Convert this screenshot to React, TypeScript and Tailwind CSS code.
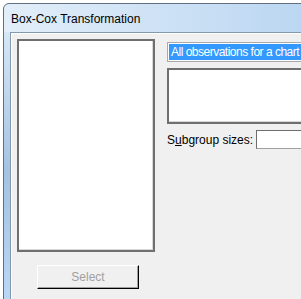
import React from "react";

const font = { fontFamily: '"Liberation Sans", Arial, sans-serif' };

const App: React.FC = () => {
  return (
    <div className="w-[301px] h-[299px] overflow-hidden bg-white" style={font}>
      <div className="ml-[3px] mt-[3px] w-[320px] h-[310px] border border-[#5f6f80] rounded-tl-[6px] bg-linear-to-r from-[#e2eef9] to-[#b9d5f1] flex flex-col">
        {/* Title */}
        <div className="h-[28px] pl-[7px] pt-[1px] flex items-center text-[12px] text-black">
          Box-Cox Transformation
        </div>

        {/* Frame + client */}
        <div className="flex-1 flex bg-linear-to-b from-[#d6e6f6] via-[#a3c3e3] to-[#bbd9f7]">
          <div className="w-[6px] shrink-0" />
          <div className="flex-1 border-l border-t border-[#8397ad] bg-[#f0f0f0] shadow-[inset_1px_1px_0_#ffffff] pl-[6px] pt-[6px] flex gap-[12px] text-[12px]">
            {/* Left column */}
            <div className="flex flex-col">
              <div className="w-[138px] h-[213px] bg-white border-2 border-[#6f6f6f] shadow-[inset_-1px_-1px_0_#d8d8d8]" />
              <button className="mt-[13px] ml-[20px] w-[102px] h-[24px] bg-[#f0f0f0] border border-t-white border-l-white border-r-black border-b-black shadow-[inset_-1px_-1px_0_#a0a0a0] text-[#a0a0a0] text-[12px] flex items-center justify-center pb-[1px]">
                Select
              </button>
            </div>

            {/* Right column */}
            <div className="flex-1 min-w-0 flex flex-col pt-[3px]">
              <div className="h-[20px] border border-[#a9a9a9] bg-white p-[1px]">
                <div className="h-full bg-[#3399ff] text-white pl-[2px] flex items-center whitespace-nowrap overflow-hidden leading-none tracking-[-0.5px]">
                  All observations for a chart are in one column
                </div>
              </div>
              <div className="mt-[6px] h-[56px] bg-white border-2 border-[#6f6f6f] shadow-[inset_-1px_-1px_0_#d8d8d8]" />
              <div className="mt-[6px] flex items-center">
                <span className="w-[89px] shrink-0 text-black whitespace-nowrap pt-[1px]">
                  S<span className="underline">u</span>bgroup sizes:
                </span>
                <div className="h-[19px] flex-1 bg-white border border-[#a0a0a0] border-t-[#6d6d6d] border-l-[#6d6d6d]" />
              </div>
            </div>
          </div>
        </div>
      </div>
    </div>
  );
};

export default App;
